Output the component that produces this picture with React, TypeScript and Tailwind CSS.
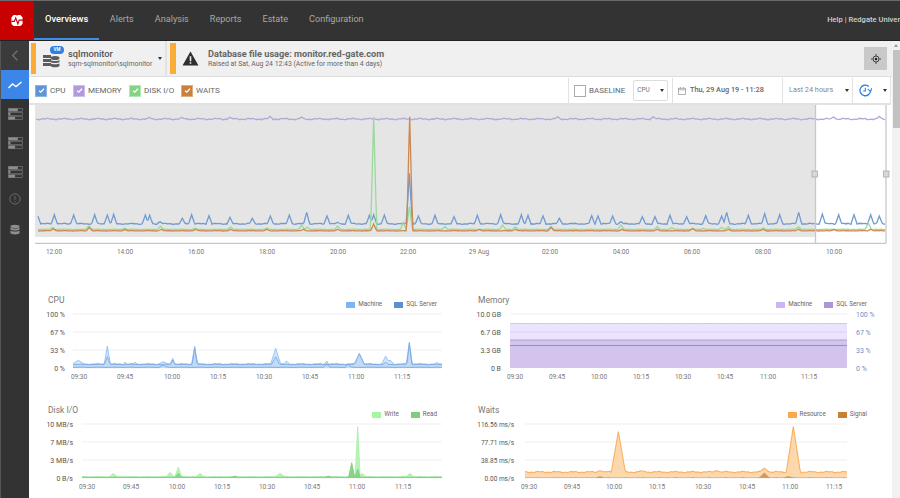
import React from "react";

type S = [number, number, number?];
const noise = (x: number, a: number) =>
  (Math.sin(x * 0.37) + Math.sin(x * 1.13 + 1) * 0.6 + Math.sin(x * 2.9 + 2) * 0.4) * a;

function pts(x0: number, x1: number, base: number, spikes: S[], amp = 0.3, w = 3, step = 1) {
  const xs: number[] = [];
  for (let x = x0; x <= x1 + 0.001; x += step) xs.push(x);
  for (const [sx] of spikes) if (sx >= x0 && sx <= x1) xs.push(sx);
  xs.sort((a, b) => a - b);
  return xs.map((x) => {
    let y = base + noise(x, amp);
    for (const [sx, sy, sw] of spikes) {
      const width = sw ?? w;
      const d = Math.abs(x - sx);
      if (d < width) y = Math.min(y, sy + (base - sy) * (d / width));
    }
    return `${x.toFixed(1)},${y.toFixed(1)}`;
  });
}
const poly = (p: string[]) => p.join(" ");
const area = (p: string[], x0: number, x1: number, bottom: number) =>
  `${x0},${bottom} ${p.join(" ")} ${x1},${bottom}`;

const L = (x: number, y: number): S => [x / 3, 100 + y / 3];
const R = (x: number, y: number): S => [450 + x / 3, 100 + y / 3];

const cpuOv: S[] = [
  L(113, 346), L(163, 344), L(221, 345), L(284, 344), L(322, 345), L(341, 343), L(436, 345), L(449, 346), L(480, 365),
  L(547, 355), L(575, 344), L(627, 347), L(690, 352), L(757, 355), L(811, 348), L(868, 345), L(920, 337), L(981, 348),
  L(1013, 367), L(1045, 346), L(1108, 346), L(1121, 344), L(1153, 345), L(1228, 220), L(1255, 348), L(1305, 346),
  R(12, 350), R(82, 346), R(152, 344), R(214, 344), R(234, 346), R(279, 348), R(328, 355), R(425, 347), R(444, 348),
  R(488, 348), R(513, 365), R(577, 350), R(615, 350), R(660, 346), R(710, 350), R(767, 347), R(815, 348), R(830, 337),
  R(895, 346), R(944, 341), R(989, 344), R(1046, 337), R(1117, 342), R(1166, 344), R(1212, 344), R(1262, 344), R(1288, 348),
];
const greenOv: S[] = [
  L(1121, 50), L(157, 382), L(266, 378), L(373, 385), L(481, 378), L(585, 384), L(692, 381), L(800, 384), L(905, 375),
  L(922, 382), L(1013, 378), L(1210, 368), L(1228, 320), L(1335, 380), R(158, 375), R(196, 380), R(303, 380), R(513, 375),
  R(622, 380), R(665, 383), R(760, 385), R(815, 382), R(835, 380), R(940, 384), R(1045, 380), R(1255, 368),
];
const orangeOv: S[] = [
  L(1229, 50), L(1121, 372), L(160, 386), L(268, 382), L(375, 388), L(484, 388), L(587, 388), L(692, 388), L(800, 388),
  L(910, 388), L(1013, 388), R(88, 388), R(196, 388), R(303, 382), R(516, 388), R(622, 388), R(728, 385), R(835, 388),
  R(940, 388), R(1045, 388), R(1152, 388), R(1262, 388),
];
const memOv: S[] = [L(448, 52), L(545, 52), L(690, 52), L(810, 49), L(905, 51), R(323, 50), R(610, 50), R(1150, 51), R(1288, 49)];

const ticksOv: [string, number][] = [
  ["12:00", 54], ["14:00", 125], ["16:00", 196], ["18:00", 267], ["20:00", 338], ["22:00", 408],
  ["29 Aug", 479], ["02:00", 550], ["04:00", 621], ["06:00", 692], ["08:00", 763], ["10:00", 834],
];

function Overview() {
  const cpu = pts(38, 885, 223.8, cpuOv, 0.35, 3);
  const green = pts(38, 885, 229.4, greenOv, 0.15, 3);
  const orange = pts(38, 885, 230.8, orangeOv, 0.1, 3);
  const mem = pts(36, 885, 119, memOv, 0.5, 3);
  return (
    <svg viewBox="35 105 857 159" className="block w-[857px] h-[159px] ml-[6px]" style={{ fontFamily: "Roboto, sans-serif" }}>
      <rect x="35" y="105" width="781" height="132" fill="#e5e5e5" />
      <polyline points={poly(mem)} fill="none" stroke="#b7a6d9" strokeWidth="1.3" />
      <polyline points={poly(cpu)} fill="none" stroke="#6f9bd2" strokeWidth="1.3" />
      <polyline points={poly(green)} fill="none" stroke="#9ad99a" strokeWidth="1.3" />
      <polyline points={poly(orange)} fill="none" stroke="#cd8750" strokeWidth="1.3" />
      <line x1="35" y1="243.3" x2="886" y2="243.3" stroke="#c8c8c8" strokeWidth="1.3" />
      <line x1="815.5" y1="105" x2="815.5" y2="243" stroke="#c8c8c8" strokeWidth="1.3" />
      <line x1="886" y1="105" x2="886" y2="243" stroke="#c8c8c8" strokeWidth="1.3" />
      <rect x="812" y="171" width="5.5" height="6" fill="#d8d8d8" stroke="#aaa" strokeWidth="0.8" />
      <rect x="883.5" y="171" width="5.5" height="6" fill="#d8d8d8" stroke="#aaa" strokeWidth="0.8" />
      {ticksOv.map(([t, x]) => (
        <text key={t} x={x} y="254" textAnchor="middle" fontSize="6.5" fill="#777">{t}</text>
      ))}
    </svg>
  );
}

const Yl = ({ x, y, t, c = "#555", a = "end", fs = 7 }: { x: number; y: number; t: string; c?: string; a?: "end" | "start"; fs?: number }) => (
  <text x={x} y={y + 2.5} textAnchor={a} fontSize={fs} fill={c}>{t}</text>
);
const grid = (x0: number, x1: number, ys: number[]) =>
  ys.map((y) => <line key={y} x1={x0} x2={x1} y1={y} y2={y} stroke="#efefef" strokeWidth="1" />);
const xt = (list: [string, number][], y: number) =>
  list.map(([t, x]) => (
    <text key={t} x={x} y={y} textAnchor="middle" fontSize="6.5" fill="#777">{t}</text>
  ));
const T = ["09:30", "09:45", "10:00", "10:15", "10:30", "10:45", "11:00", "11:15"];
const zip = (xs: number[]) => T.map((t, i) => [t, xs[i]] as [string, number]);

const chartClass = "block w-[396px] h-[72px] overflow-visible";

function CpuChart() {
  const c = (x: number, y: number, w?: number): S => [30 + x / 3, 285 + y / 3, w];
  const machine = pts(73, 442, 364, [
    c(145, 226, 6), c(232, 183, 3), c(400, 230, 5), c(428, 220, 2.5), c(494, 183, 3), c(737, 190, 5), c(770, 228, 3),
    c(988, 205, 5), c(1067, 213, 4), c(1080, 225, 4), c(1138, 172, 3), c(1220, 232, 2), c(890, 228, 2), c(285, 232, 2), c(315, 232, 2),
  ], 0.3);
  const sql = pts(73, 442, 364.5, [
    c(232, 215, 3), c(494, 190, 2.5), c(737, 215, 4), c(988, 207, 5), c(1138, 175, 2.5), c(428, 225, 2), c(1067, 232, 3),
  ], 0.2);
  const low = pts(73, 442, 367.3, [c(400, 240, 4), c(890, 235, 3), c(955, 238, 3)], 0.1);
  return (
    <svg viewBox="48 310 396 72" className={chartClass} style={{ fontFamily: "Roboto, sans-serif" }}>
      {grid(73, 442, [314, 332, 350, 368])}
      <polygon points={area(machine, 73, 442, 368)} fill="#c6dffb" fillOpacity="0.8" />
      <polyline points={poly(machine)} fill="none" stroke="#8fc0f6" strokeWidth="0.9" />
      <polygon points={area(sql, 73, 442, 368)} fill="#9dc0ea" fillOpacity="0.3" />
      <polyline points={poly(sql)} fill="none" stroke="#7da9e0" strokeWidth="0.9" />
      <polyline points={poly(low)} fill="none" stroke="#7fb0ea" strokeWidth="1" />
      <Yl x={65} y={314} t="100 %" /><Yl x={65} y={332} t="67 %" /><Yl x={65} y={350} t="33 %" /><Yl x={65} y={368} t="0 %" />
      {xt(zip([79, 125, 172, 218, 264, 310, 356, 402]), 379)}
    </svg>
  );
}

function MemChart() {
  const top = pts(510, 847, 323.5, [], 0.25);
  return (
    <svg viewBox="478 310 396 72" className={chartClass} style={{ fontFamily: "Roboto, sans-serif" }}>
      {grid(510, 847, [314])}
      <polygon points={area(top, 510, 847, 368)} fill="#ece3fd" />
      <line x1="510" x2="847" y1="323.5" y2="323.5" stroke="#cbb8ef" strokeWidth="0.8" />
      <line x1="510" x2="847" y1="332" y2="332" stroke="#ddd0f6" strokeWidth="1" />
      <rect x="510" y="340" width="337" height="28" fill="#d2c4ec" />
      <line x1="510" x2="847" y1="340" y2="340" stroke="#b3a0d6" strokeWidth="1" />
      <line x1="510" x2="847" y1="345.5" y2="345.5" stroke="#8494dc" strokeWidth="1" />
      <Yl x={501} y={314} t="10.0 GB" /><Yl x={501} y={332} t="6.7 GB" /><Yl x={501} y={350} t="3.3 GB" /><Yl x={501} y={368} t="0 B" />
      <Yl x={856} y={314} t="100 %" c="#6f8fc6" a="start" /><Yl x={856} y={332} t="67 %" c="#6f8fc6" a="start" />
      <Yl x={856} y={350} t="33 %" c="#6f8fc6" a="start" /><Yl x={856} y={368} t="0 %" c="#6f8fc6" a="start" />
      {xt(zip([515, 557, 599, 641, 683, 725, 768, 809]), 379)}
    </svg>
  );
}

function DiskChart() {
  const c = (x: number, y: number, w?: number): S => [30 + x / 3, 395 + y / 3, w];
  const write = pts(82, 442, 476.8, [
    c(250, 235, 4), c(420, 232, 4), c(445, 216, 3.5), c(510, 235, 4), c(750, 235, 5), c(965, 215, 3), c(983, 95, 2.5), c(997, 235, 3), c(1140, 235, 4),
  ], 0.08);
  const read = pts(82, 442, 477.2, [c(445, 235, 3), c(965, 203, 3), c(983, 222, 2.5), c(615, 243, 3), c(895, 243, 3)], 0.05);
  return (
    <svg viewBox="48 420 396 72" className={chartClass} style={{ fontFamily: "Roboto, sans-serif" }}>
      {grid(82, 442, [424, 442, 460, 478])}
      <polygon points={area(write, 82, 442, 478)} fill="#b6f5b6" />
      <polyline points={poly(write)} fill="none" stroke="#a4f0a4" strokeWidth="0.8" />
      <polygon points={area(read, 82, 442, 478)} fill="#86d486" />
      <polyline points={poly(read)} fill="none" stroke="#7fce7f" strokeWidth="0.8" />
      <Yl x={73} y={424} t="10 MB/s" /><Yl x={73} y={442} t="7 MB/s" /><Yl x={73} y={460} t="3 MB/s" /><Yl x={73} y={478} t="0 B/s" />
      {xt(zip([87, 131, 177, 222, 267, 312, 357, 403]), 488.5)}
    </svg>
  );
}

function WaitsChart() {
  const c = (x: number, y: number, w?: number): S => [460 + x / 3, 395 + y / 3, w];
  const res = pts(525, 847, 472, [c(475, 110, 7), c(1000, 95, 7), c(913, 220, 5), c(420, 227, 4), c(545, 227, 5), c(770, 227, 4)], 0.45);
  const sig = pts(525, 847, 477.4, [c(913, 232, 5), c(420, 243, 4), c(985, 243, 5)], 0.05);
  return (
    <svg viewBox="478 420 396 72" className={chartClass} style={{ fontFamily: "Roboto, sans-serif" }}>
      {grid(525, 847, [424, 442, 460, 478])}
      <polygon points={area(res, 525, 847, 478)} fill="#fcd8ad" />
      <polyline points={poly(res)} fill="none" stroke="#fbb060" strokeWidth="1.1" />
      <polygon points={area(sig, 525, 847, 478)} fill="#d69a60" />
      <Yl fs={6.5} x={514} y={424} t="116.56 ms/s" /><Yl fs={6.5} x={514} y={442} t="77.71 ms/s" /><Yl fs={6.5} x={514} y={460} t="38.85 ms/s" /><Yl fs={6.5} x={514} y={478} t="0.00 ms/s" />
      {xt(zip([529, 572, 614, 657, 703, 747, 790, 834]), 488.5)}
    </svg>
  );
}

const Leg = ({ c, t }: { c: string; t: string }) => (
  <div className="flex items-center gap-[3px]">
    <span className={`w-[9px] h-[6px] ${c}`} />
    <span className="text-[6.3px] text-[#666]">{t}</span>
  </div>
);

function Panel({ title, legend, children }: { title: string; legend: React.ReactNode; children: React.ReactNode }) {
  return (
    <div className="w-[396px] h-[110px] flex flex-col">
      <div className="flex items-start justify-between h-[18px] pr-[7px]">
        <span className="text-[8.5px] text-[#777] mt-[2px]">{title}</span>
        <div className="flex gap-[12px] mt-[8px]">{legend}</div>
      </div>
      {children}
    </div>
  );
}

const Check = ({ c, border, t, w }: { c: string; border: string; t: string; w: string }) => (
  <div className={`flex items-center gap-[3px] ${w}`}>
    <span className={`w-[12px] h-[12px] shrink-0 flex items-center justify-center border ${c} ${border}`}>
      <svg viewBox="0 0 10 10" className="w-[7px] h-[7px]" fill="none" stroke="#fff" strokeWidth="1.8">
        <path d="M1.5 5.5 4 7.5 8.5 2.5" />
      </svg>
    </span>
    <span className="text-[8px] text-[#666] whitespace-nowrap">{t}</span>
  </div>
);

const ServerIcon = () => (
  <svg viewBox="0 0 16 13" className="w-[15px] h-[12px]">
    <rect x="0.5" y="0.5" width="15" height="3" fill="none" stroke="#7a7a7a" strokeWidth="0.7" />
    <rect x="0.5" y="0.5" width="10" height="3" fill="#8e8e8e" />
    <rect x="0.5" y="5" width="15" height="3" fill="none" stroke="#7a7a7a" strokeWidth="0.7" />
    <rect x="0.5" y="5" width="2" height="3" fill="#8e8e8e" />
    <rect x="0.5" y="9.5" width="15" height="3" fill="none" stroke="#7a7a7a" strokeWidth="0.7" />
    <rect x="0.5" y="9.5" width="7" height="3" fill="#8e8e8e" />
  </svg>
);

const Caret = () => <span className="shrink-0 w-0 h-0 border-l-[2.5px] border-r-[2.5px] border-t-[3px] border-l-transparent border-r-transparent border-t-[#333]" />;

export default function App() {
  return (
    <div className="w-[900px] h-[498px] overflow-hidden flex flex-col bg-white" style={{ fontFamily: "Roboto, 'Liberation Sans', sans-serif" }}>
      <header className="h-[41px] shrink-0 flex overflow-hidden bg-[#333333] border-t border-t-[#6b6b6b] border-b border-b-[#222]">
        <div className="w-[34px] shrink-0 h-full bg-[#c80000] flex items-center justify-center">
          <svg viewBox="0 0 14 14" className="w-[12px] h-[13px]">
            <path d="M3 0.5h3L7 1.500 8 0.5h3l2.500 3v7.500L11 13.500H3L0.5 11V3.500z" fill="#fff" />
            <path d="M0.5 8h3.500l1.500-4 2.500 7 1.500-4.500h4.500" fill="none" stroke="#c80000" strokeWidth="1.300" />
          </svg>
        </div>
        <nav className="flex h-full shrink-0">
          <div className="px-[11px] h-full flex items-center text-[9.4px] font-medium text-white border-b-[2px] border-b-[#3f8fe8]">Overviews</div>
          {["Alerts", "Analysis", "Reports", "Estate", "Configuration"].map((t) => (
            <div key={t} className="px-[10.5px] h-full flex items-center text-[9.1px] text-[#a8a8a8] pb-[2px]">{t}</div>
          ))}
        </nav>
        <div className="ml-[453px] shrink-0 whitespace-nowrap flex items-center text-[7.6px] font-medium text-[#d0d0d0] pb-[2px]">Help | Redgate University</div>
      </header>

      <div className="flex-1 flex min-h-0">
        <aside className="w-[29px] shrink-0 bg-[#333333] border-l border-l-[#555] flex flex-col items-center">
          <div className="w-full h-[29px] flex items-center justify-center bg-[#3b3b3b]">
            <svg viewBox="0 0 10 14" className="w-[8px] h-[11px]" fill="none" stroke="#6e6e6e" strokeWidth="1.800"><path d="M8 1 2 7l6 6" /></svg>
          </div>
          <div className="w-full h-[29px] flex items-center justify-center bg-[#3b86e6]">
            <svg viewBox="0 0 14 8" className="w-[14px] h-[8px]" fill="none" stroke="#fff" strokeWidth="1.500"><path d="M0.5 7 4.500 3 8 5.500 13.500 1" /></svg>
          </div>
          <div className="flex flex-col items-center mt-[9px] gap-[17px]">
            <ServerIcon /><ServerIcon /><ServerIcon />
          </div>
          <svg viewBox="0 0 14 14" className="w-[12px] h-[12px] mt-[15px]" fill="none" stroke="#707070" strokeWidth="1">
            <circle cx="7" cy="7" r="6" /><path d="M7 3.500v4.500M7 9.500v1.200" />
          </svg>
          <svg viewBox="0 0 12 13" className="w-[10px] h-[12px] mt-[19px]" fill="#8e8e8e">
            <ellipse cx="6" cy="2.200" rx="5.500" ry="2" /><path d="M.5 3.600c1 1.600 10 1.600 11 0v2.400c-1 1.600-10 1.600-11 0zM.5 7.200c1 1.600 10 1.600 11 0v2.600c0 2.600-11 2.600-11 0z" />
          </svg>
        </aside>

        <main className="flex-1 min-w-0 flex flex-col">
          <div className="h-[36px] shrink-0 flex bg-[#f0f0f0] border-b border-b-[#dedede]">
            <div className="w-[138px] shrink-0 flex items-center pl-[2px] border-r-[2px] border-r-[#e2e2e2]">
              <span className="shrink-0 w-[5px] h-[31px] bg-[#fbac35]" />
              <div className="relative shrink-0 w-[17px] h-[17px] ml-[7px] mt-[4px]">
                <svg viewBox="0 0 17 17" className="w-[17px] h-[17px]" fill="#5c5c5c">
                  <rect x="0" y="3" width="8" height="3" /><rect x="0" y="7" width="8" height="3" /><rect x="0" y="11" width="8" height="3" />
                  <ellipse cx="12" cy="6" rx="4.500" ry="2" /><path d="M7.500 8c1 1.300 8 1.300 9 0v2c-1 1.300-8 1.300-9 0zM7.500 11.200c1 1.300 8 1.300 9 0v2.500c-1 2-8 2-9 0z" />
                </svg>
                <span className="absolute -top-[6px] left-[7px] w-[14px] h-[8px] rounded-full bg-[#2f80e4] text-white text-[4.500px] font-bold flex items-center justify-center leading-none">VM</span>
              </div>
              <div className="ml-[8px] flex flex-col leading-none">
                <span className="text-[9.300px] font-medium text-[#555]">sqlmonitor</span>
                <span className="text-[6.900px] text-[#666] mt-[2px] whitespace-nowrap">sqm-sqlmonitor\sqlmonitor</span>
              </div>
              <span className="ml-[6px] flex"><Caret /></span>
            </div>
            <div className="flex-1 flex items-center pl-[3px]">
              <span className="shrink-0 w-[6px] h-[31px] bg-[#fbac35]" />
              <svg viewBox="0 0 18 16" className="shrink-0 w-[17px] h-[15px] ml-[6px]">
                <path d="M9 0.500 17.500 15.500H.5z" fill="#2f2f2f" /><path d="M9 5.500v5.500M9 12v1.600" stroke="#f0f0f0" strokeWidth="1.700" />
              </svg>
              <div className="ml-[9px] flex flex-col leading-none">
                <span className="text-[9.200px] font-bold text-[#666]">Database file usage: monitor.red-gate.com</span>
                <span className="text-[6.900px] text-[#666] mt-[2px]">Raised at Sat, Aug 24 12:43 (Active for more than 4 days)</span>
              </div>
              <div className="ml-auto mr-[5px] w-[23px] h-[23px] bg-[#c9c9c9] flex items-center justify-center">
                <svg viewBox="0 0 12 12" className="w-[10px] h-[10px]" fill="none" stroke="#222" strokeWidth="1">
                  <circle cx="6" cy="6" r="3.600" /><circle cx="6" cy="6" r="1.600" fill="#222" stroke="none" /><path d="M6 0v2M6 10v2M0 6h2M10 6h2" />
                </svg>
              </div>
            </div>
          </div>

          <div className="h-[28px] pt-[1px] shrink-0 flex items-stretch border-b-2 border-b-[#e2e2e2] mr-[1px] border-r border-r-[#e2e2e2]">
            <div className="flex items-center pl-[6px] flex-1">
              <Check w="w-[38px]" c="bg-[#5f94d6]" border="border-[#8fb4e2]" t="CPU" />
              <Check w="w-[56px]" c="bg-[#b299dd]" border="border-[#cdbdea]" t="MEMORY" />
              <Check w="w-[52px]" c="bg-[#84d484]" border="border-[#b2e6b2]" t="DISK I/O" />
              <Check w="w-[50px]" c="bg-[#c9803c]" border="border-[#dfae80]" t="WAITS" />
            </div>
            <div className="w-[104px] shrink-0 flex items-center border-l border-l-[#e2e2e2] pl-[5px] gap-[3px]">
              <span className="shrink-0 w-[12px] h-[12px] border border-[#aaa]" />
              <span className="text-[8px] text-[#666] mr-[5px]">BASELINE</span>
              <div className="w-[35px] h-[21px] border border-[#ddd] rounded-[2px] flex items-center justify-between px-[3px]">
                <span className="text-[6.500px] text-[#777]">CPU</span><Caret />
              </div>
            </div>
            <div className="w-[110px] shrink-0 flex items-center border-l border-l-[#e2e2e2] pl-[5px] gap-[4px]">
              <svg viewBox="0 0 10 10" className="shrink-0 w-[8px] h-[8px]" fill="none" stroke="#888" strokeWidth="0.800">
                <rect x="0.5" y="1.500" width="9" height="8" /><path d="M0.5 3.500h9M3 0v2M7 0v2" />
              </svg>
              <span className="text-[7.300px] font-medium text-[#666] whitespace-nowrap">Thu, 29 Aug 19 - 11:28</span>
            </div>
            <div className="w-[70px] shrink-0 flex items-center justify-between border-l border-l-[#e2e2e2] pl-[6px] pr-[3px]">
              <span className="text-[7.300px] text-[#888] whitespace-nowrap">Last 24 hours</span><Caret />
            </div>
            <div className="w-[38px] shrink-0 flex items-center border-l border-l-[#e2e2e2] pl-[6px] gap-[11px]">
              <svg viewBox="0 0 14 14" className="w-[13px] h-[13px] shrink-0" fill="none" stroke="#2f80e4" strokeWidth="1.400">
                <path d="M12.500 7A5.700 5.700 0 1 1 10.500 2.600" /><path d="M9.500 5.500 12.500 8 13.800 4.500" strokeWidth="1.100" /><path d="M6.800 4v3.500H4.500" strokeWidth="1.200" />
              </svg>
              <Caret />
            </div>
          </div>

          <div className="flex-1 min-h-0 overflow-hidden">
            <Overview />
            <div className="grid grid-cols-[396px_396px] gap-x-[34px] pl-[19px] mt-[28px]">
              <Panel title="CPU" legend={<><Leg c="bg-[#7cb5f5]" t="Machine" /><Leg c="bg-[#5b8fd0]" t="SQL Server" /></>}><CpuChart /></Panel>
              <Panel title="Memory" legend={<><Leg c="bg-[#cbb5f7]" t="Machine" /><Leg c="bg-[#ad96d8]" t="SQL Server" /></>}><MemChart /></Panel>
              <Panel title="Disk I/O" legend={<><Leg c="bg-[#a4f5a4]" t="Write" /><Leg c="bg-[#7fce7f]" t="Read" /></>}><DiskChart /></Panel>
              <Panel title="Waits" legend={<><Leg c="bg-[#fba94f]" t="Resource" /><Leg c="bg-[#c98036]" t="Signal" /></>}><WaitsChart /></Panel>
            </div>
          </div>
        </main>

        <div className="w-[8px] shrink-0 bg-[#f1f1f1] flex flex-col items-center">
          <span className="mt-[3px] w-0 h-0 border-l-[2px] border-r-[2px] border-b-[3px] border-l-transparent border-r-transparent border-b-[#999]" />
          <span className="mt-[3px] w-[7px] ml-[1px] h-[78px] bg-[#c1c1c1]" />
        </div>
      </div>
    </div>
  );
}
